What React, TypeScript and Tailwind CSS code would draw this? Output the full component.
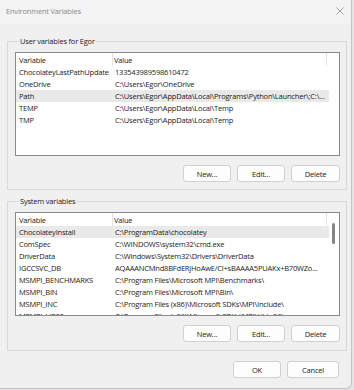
import React from "react";

const userVars: [string, string][] = [
  ["ChocolateyLastPathUpdate", "133543989598610472"],
  ["OneDrive", "C:\\Users\\Egor\\OneDrive"],
  ["Path", "C:\\Users\\Egor\\AppData\\Local\\Programs\\Python\\Launcher\\;C:\\..."],
  ["TEMP", "C:\\Users\\Egor\\AppData\\Local\\Temp"],
  ["TMP", "C:\\Users\\Egor\\AppData\\Local\\Temp"],
];

const sysVars: [string, string][] = [
  ["ChocolateyInstall", "C:\\ProgramData\\chocolatey"],
  ["ComSpec", "C:\\WINDOWS\\system32\\cmd.exe"],
  ["DriverData", "C:\\Windows\\System32\\Drivers\\DriverData"],
  ["IGCCSVC_DB", "AQAAANCMnd8BFdERjHoAwE/Cl+sBAAAA5PUAKx+B70WZo..."],
  ["MSMPI_BENCHMARKS", "C:\\Program Files\\Microsoft MPI\\Benchmarks\\"],
  ["MSMPI_BIN", "C:\\Program Files\\Microsoft MPI\\Bin\\"],
  ["MSMPI_INC", "C:\\Program Files (x86)\\Microsoft SDKs\\MPI\\Include\\"],
  ["MSMPI_LIB32", "C:\\Program Files (x86)\\Microsoft SDKs\\MPI\\Lib\\x86\\"],
];

function Btn({ label, w }: { label: string; w: string }) {
  return (
    <div
      className={`${w} h-[17px] flex items-center justify-center rounded-[3px] border border-[#d0d0d0] bg-[#fdfdfd] text-[#1b1b1b]`}
    >
      {label}
    </div>
  );
}

function ListBox({
  rows,
  selected,
  height,
  scroll,
}: {
  rows: [string, string][];
  selected: number;
  height: string;
  scroll: boolean;
}) {
  return (
    <div className={`w-[325px] ${height} border border-[#8a8a8a] bg-white flex overflow-hidden`}>
      <div className="w-[313px] flex flex-col">
        <div className="h-[13px] flex items-center shrink-0">
          <div className="w-[97px] pl-[3px] h-full flex items-center border-r border-[#e5e5e5]">Variable</div>
          <div className="w-[214px] pl-[1px] h-full flex items-center border-r border-[#e5e5e5]">Value</div>
        </div>
        {rows.map(([k, v], i) => (
          <div
            key={k}
            className={`h-[12px] shrink-0 flex items-center whitespace-nowrap ${
              i === selected ? "bg-[#e9e9e9]" : ""
            }`}
          >
            <div className="w-[97px] pl-[3px] overflow-hidden">{k}</div>
            <div className="w-[214px] pl-[2px] overflow-hidden">{v}</div>
          </div>
        ))}
      </div>
      <div className="w-[10px] flex justify-start">
        {scroll && <div className="ml-[3px] mt-[10px] w-[3px] h-[21px] rounded-full bg-[#868686]" />}
      </div>
    </div>
  );
}

export default function App() {
  return (
    <div
      className="w-[354px] h-[390px] bg-[#e4e4e4] overflow-hidden text-[7.5px] tracking-[-0.2px] leading-[12px] text-[#1b1b1b]"
      style={{ fontFamily: '"Open Sans", "Noto Sans", sans-serif' }}
    >
      <div className="w-[352px] h-[389px] bg-[#f0f0f0] border-r border-b border-[#c4c4c4] rounded-br-[6px] flex flex-col">
        <div className="h-[24px] shrink-0 flex items-center justify-between pl-[6px] pr-[7px] bg-[#f3f3f3] text-[#8c8c8c]">
          <span className="-mt-[2px]">Environment Variables</span>
          <svg width="8" height="8" viewBox="0 0 8 8" className="-mt-[3px]">
            <path d="M0.5 0.5 L7.5 7.5 M7.5 0.5 L0.5 7.5" stroke="#9a9a9a" strokeWidth="0.9" />
          </svg>
        </div>
        <div className="pl-[7px] flex flex-col">
          <fieldset className="mt-[11px] w-[340px] border border-[#d9d9d9] pl-[7px] pb-[7px]">
            <legend className="ml-[4px] px-[1px] h-[12px] leading-[12px] text-[#1b1b1b]">User variables for Egor</legend>
            <div className="mt-[5px]">
              <ListBox rows={userVars} selected={2} height="h-[104px]" scroll={false} />
            </div>
            <div className="mt-[9px] flex justify-end gap-[6px] mr-[6px]">
              <Btn label="New..." w="w-[48px]" />
              <Btn label="Edit..." w="w-[48px]" />
              <Btn label="Delete" w="w-[49px]" />
            </div>
          </fieldset>
          <fieldset className="mt-[5px] w-[340px] border border-[#d9d9d9] pl-[7px] pb-[8px]">
            <legend className="ml-[4px] px-[1px] h-[12px] leading-[12px] text-[#1b1b1b]">System variables</legend>
            <div className="mt-[5px]">
              <ListBox rows={sysVars} selected={0} height="h-[104px]" scroll={true} />
            </div>
            <div className="mt-[9px] flex justify-end gap-[6px] mr-[6px]">
              <Btn label="New..." w="w-[48px]" />
              <Btn label="Edit..." w="w-[48px]" />
              <Btn label="Delete" w="w-[49px]" />
            </div>
          </fieldset>
          <div className="mt-[10px] w-[340px] flex justify-end gap-[6px] pr-[8px]">
            <Btn label="OK" w="w-[48px]" />
            <Btn label="Cancel" w="w-[52px]" />
          </div>
        </div>
      </div>
    </div>
  );
}
